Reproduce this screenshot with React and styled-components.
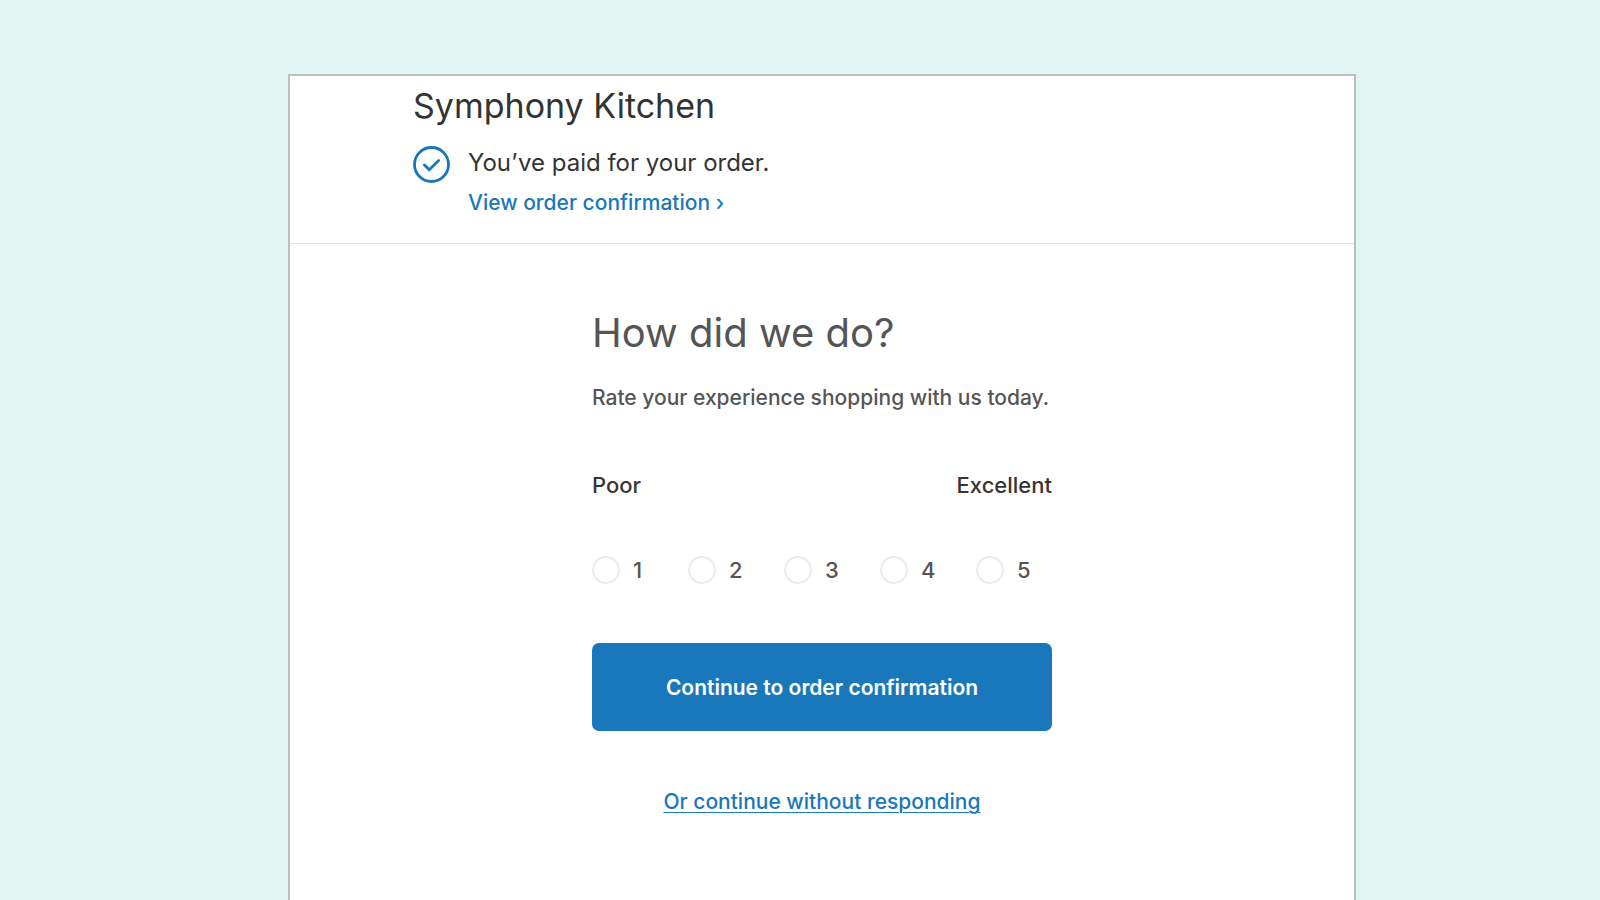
import { useState } from 'react';
import styled, { createGlobalStyle } from 'styled-components';

const scores = [1, 2, 3, 4, 5];

export default function App() {
  const [score, setScore] = useState(null);

  return (
    <Page>
      <GlobalStyle />
      <Window>
        <Header>
          <Shop>Symphony Kitchen</Shop>
          <Status>
            <CheckIcon viewBox="0 0 37 37" aria-hidden="true">
              <circle cx="18.5" cy="18.5" r="17" />
              <path d="M11.4 18.9 L16.3 23.8 L25.6 14.6" />
            </CheckIcon>
            <StatusText>
              <Paid>You’ve paid for your order.</Paid>
              <ViewLink href="#confirmation">View order confirmation ›</ViewLink>
            </StatusText>
          </Status>
        </Header>
        <Survey onSubmit={(e) => e.preventDefault()}>
          <Question>How did we do?</Question>
          <Hint>Rate your experience shopping with us today.</Hint>
          <Scale>
            <span>Poor</span>
            <span>Excellent</span>
          </Scale>
          <Scores role="radiogroup" aria-label="Rating">
            {scores.map((value) => (
              <Score key={value}>
                <Radio
                  type="radio"
                  name="score"
                  value={value}
                  checked={score === value}
                  onChange={() => setScore(value)}
                />
                {value}
              </Score>
            ))}
          </Scores>
          <Continue type="submit">Continue to order confirmation</Continue>
          <SkipLink href="#skip">Or continue without responding</SkipLink>
        </Survey>
      </Window>
    </Page>
  );
}

const GlobalStyle = createGlobalStyle`
* {
  box-sizing: border-box;
}
body {
  margin: 0;
  background-color: #e1f6f3;
  font-family: Inter, "Liberation Sans", sans-serif;
  font-size: 21px;
  font-weight: 450;
  line-height: 28px;
  color: #555;
}
h1, h2, p {
  margin: 0;
}
`;

const Page = styled.div`
display: flex;
min-height: 100vh;
padding: 74px 244px 0 288px;
@media screen and (max-width: 1100px){
  padding: 40px 20px 0;
}
`;

const Window = styled.main`
flex: 1;
min-width: 0;
background-color: #fff;
border: 2px solid #bebebe;
border-bottom: none;
`;

const Header = styled.header`
padding: 8px 24px 26px 123px;
border-bottom: 1px solid #e1e1e1;
@media screen and (max-width: 1100px){
  padding-left: 24px;
}
`;

const Shop = styled.h1`
font-size: 34px;
font-weight: 400;
line-height: 44px;
color: #333;
`;

const Status = styled.div`
display: flex;
gap: 18px;
margin-top: 18px;
`;

const CheckIcon = styled.svg`
flex: none;
width: 37px;
height: 37px;
fill: none;
stroke: #1978bb;
stroke-width: 2.8;
stroke-linecap: round;
`;

const StatusText = styled.div`
display: flex;
flex-direction: column;
align-items: flex-start;
gap: 9px;
`;

const Paid = styled.p`
font-size: 24px;
font-weight: 400;
line-height: 34px;
color: #333;
`;

const ViewLink = styled.a`
color: #1978bb;
text-decoration: none;
`;

const Survey = styled.form`
display: flex;
flex-direction: column;
max-width: 460px;
margin: 0 auto;
padding: 62px 0 40px;
`;

const Question = styled.h2`
font-size: 40px;
font-weight: 400;
line-height: 54px;
`;

const Hint = styled.p`
margin-top: 24px;
`;

const Scale = styled.div`
display: flex;
justify-content: space-between;
margin-top: 59px;
font-size: 22px;
font-weight: 500;
color: #3a3333;
`;

const Scores = styled.div`
display: grid;
grid-template-columns: repeat(5, 1fr);
gap: 20px;
margin-top: 57px;
`;

const Score = styled.label`
display: flex;
align-items: center;
gap: 13px;
font-size: 22px;
cursor: pointer;
`;

const Radio = styled.input`
appearance: none;
flex: none;
width: 28px;
height: 28px;
margin: 0;
border: 2px solid #ececec;
border-radius: 50%;
background-color: #fff;
cursor: pointer;
&:checked{
  border: 8px solid #1978bb;
}
`;

const Continue = styled.button`
height: 88px;
margin-top: 59px;
border: none;
border-radius: 7px;
background-color: #1978bb;
color: #fff;
font-family: inherit;
font-size: 21px;
font-weight: 600;
cursor: pointer;
`;

const SkipLink = styled.a`
align-self: center;
margin-top: 57px;
color: #1978bb;
text-underline-offset: 3px;
text-decoration-thickness: 1px;
`;
